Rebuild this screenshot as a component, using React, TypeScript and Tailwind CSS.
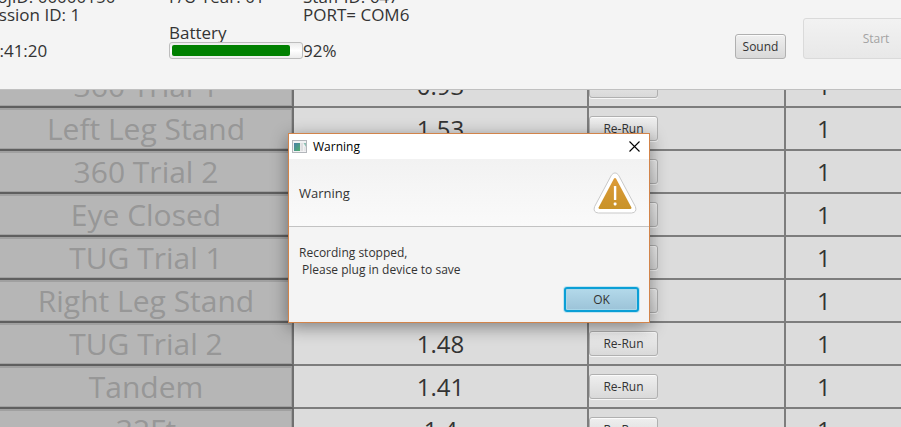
const trials = [
  { name: '360 Trial 1', value: '0.93', count: 1 },
  { name: 'Left Leg Stand', value: '1.53', count: 1 },
  { name: '360 Trial 2', value: '1.47', count: 1 },
  { name: 'Eye Closed', value: '1.45', count: 1 },
  { name: 'TUG Trial 1', value: '1.46', count: 1 },
  { name: 'Right Leg Stand', value: '1.44', count: 1 },
  { name: 'TUG Trial 2', value: '1.48', count: 1 },
  { name: 'Tandem', value: '1.41', count: 1 },
  { name: '32Ft', value: '1.4', count: 1 },
];

const raised =
  'rounded-[3px] border border-[#b0b0b0] bg-linear-to-b from-[#efefef] to-[#d9d9d9] text-[#333] shadow-[0_1px_0_#f6f6f6,inset_0_1px_0_#fbfbfb]';

function BatteryBar({ percent }: { percent: number }) {
  return (
    <div
      role="progressbar"
      aria-label="Battery"
      aria-valuenow={percent}
      className="h-[17px] w-full rounded-[3px] border border-[#bdbdbd] bg-linear-to-b from-[#ececec] via-white to-[#ececec] p-[2px]"
    >
      <div className="h-full rounded-[2px] bg-[#008000]" style={{ width: `${percent}%` }} />
    </div>
  );
}

function Header() {
  return (
    <header className="flex h-[90px] shrink-0 overflow-hidden border-b border-[#c0c0c0] bg-[#f4f4f4]">
      <div className="-mt-[12px] -ml-[20px] grid shrink-0 grid-cols-[189px_134px_134px] grid-rows-[repeat(4,18px)] text-[17px] leading-[18px] whitespace-nowrap text-[#333]">
        <span>ProjID: 00000150</span>
        <span>F/U Year: 01</span>
        <span>Staff ID: 647</span>
        <span>Session ID: 1</span>
        <span />
        <span>PORT= COM6</span>
        <span />
        <span>Battery</span>
        <span />
        <span>10:41:20</span>
        <BatteryBar percent={92} />
        <span>92%</span>
      </div>
      <div className="flex flex-1 items-end justify-end gap-[17px] pb-[30px] text-[12px]">
        <button className={`h-[25px] w-[51px] ${raised}`}>Sound</button>
        <button
          disabled
          className="-mr-12 h-[41px] w-[146px] rounded-[3px] border border-[#dadada] bg-linear-to-b from-[#f2f2f2] to-[#e8e8e8] text-[#a3a3a3]"
        >
          Start
        </button>
      </div>
    </header>
  );
}

function TrialTable() {
  return (
    <table className="-mt-[25px] w-full table-fixed border-separate border-spacing-0 bg-[#dcdcdc] text-[24px] leading-[32px] text-[#333]">
      <colgroup>
        <col className="w-[294px]" />
        <col className="w-[295px]" />
        <col className="w-[197px]" />
        <col />
      </colgroup>
      <tbody>
        {trials.map((t) => (
          <tr key={t.name} className="h-[43px]">
            <th
              scope="row"
              className="h-[43px] border-r-2 border-b-2 border-r-[#707070] border-b-[#5f5f5f] bg-[#b6b6b6] p-0 text-center text-[30px] font-normal text-[#979797] shadow-[inset_0_2px_0_#a0a0a0,inset_-1px_-1px_0_#a0a0a0]"
            >
              {t.name}
            </th>
            <td className="border-r-2 border-b-2 border-[#7d7d7d] p-0 text-center">{t.value}</td>
            <td className="border-r-2 border-b-2 border-[#7d7d7d] p-0">
              <button className={`block h-[25px] w-[69px] text-[12px] leading-[17px] ${raised}`}>Re-Run</button>
            </td>
            <td className="border-b-2 border-[#7d7d7d] p-0 pl-[31px]">{t.count}</td>
          </tr>
        ))}
      </tbody>
    </table>
  );
}

function WindowIcon() {
  return (
    <svg width="15" height="13" viewBox="0 0 15 13" aria-hidden="true">
      <defs>
        <linearGradient id="pane" x1="0" y1="0" x2="1" y2="1">
          <stop offset="0" stopColor="#4a7fa8" />
          <stop offset="1" stopColor="#4fae6c" />
        </linearGradient>
      </defs>
      <rect x="0.5" y="0.5" width="14" height="12" fill="#f1f1f3" stroke="#b3b6bb" />
      <rect x="2" y="3" width="6" height="8" fill="url(#pane)" />
      <rect x="8.5" y="3" width="2.5" height="8" fill="#dedee0" />
      <path d="M11.5 3 H14 V7 Z" fill="#8fc0b4" />
      <rect x="12" y="7" width="2" height="4" fill="#e6e6e8" />
    </svg>
  );
}

function WarningIcon() {
  return (
    <svg width="44" height="42" viewBox="0 0 44 42" aria-hidden="true">
      <defs>
        <linearGradient id="amber" x1="0" y1="0" x2="0" y2="1">
          <stop offset="0" stopColor="#dc9a38" />
          <stop offset="1" stopColor="#c99328" />
        </linearGradient>
      </defs>
      <path
        d="M18.4 3.2 Q22 -1.4 25.6 3.2 L42.4 34.6 Q44.4 40.4 38.6 41 H5.4 Q-0.4 40.4 1.6 34.6 Z"
        fill="#fff"
        stroke="#c9c9c9"
      />
      <path d="M21 6.6 Q22 5.4 23 6.6 L38.4 35.6 Q38.8 37 37.4 37 H6.6 Q5.2 37 5.6 35.6 Z" fill="url(#amber)" />
      <rect x="20.9" y="14" width="2.4" height="14" rx="0.6" fill="#fff" />
      <rect x="20.7" y="30.6" width="2.8" height="2.8" rx="0.8" fill="#fff" />
    </svg>
  );
}

function WarningDialog() {
  return (
    <section
      role="dialog"
      aria-labelledby="dialog-title"
      className="absolute top-[133px] left-[288px] w-[362px] border border-[#d2844a] bg-[#f4f4f4] text-[12px] leading-[17px] text-[#333] shadow-[0_4px_16px_rgba(0,0,0,0.42)]"
    >
      <div className="flex h-[25px] items-center bg-white pr-[9px] pl-[3px] text-black">
        <WindowIcon />
        <h1 id="dialog-title" className="flex-1 pl-[6px]">
          Warning
        </h1>
        <button aria-label="Close">
          <svg width="11" height="11" viewBox="0 0 11 11" aria-hidden="true">
            <path d="M0.5 0.5 L10.5 10.5 M10.5 0.5 L0.5 10.5" stroke="#000" strokeWidth="1.1" />
          </svg>
        </button>
      </div>
      <div className="flex h-[68px] items-center justify-between border-b border-[#c3c3c3] bg-linear-to-b from-[#f2f2f2] to-[#fafafa] pt-px pr-3 pl-[10px] text-[13px]">
        <h2>Warning</h2>
        <WarningIcon />
      </div>
      <p className="px-[10px] pt-[17px]">
        Recording stopped,
        <br />
        <span className="pl-[3px]">Please plug in device to save</span>
      </p>
      <div className="flex justify-end px-[10px] pt-[9px] pb-[10px]">
        <button className="h-[25px] w-[75px] rounded-[3px] border-2 border-[#0a9fd6] bg-linear-to-b from-[#b3d9ea] to-[#9cc3d8] shadow-[0_0_0_1px_#c3e4f0,inset_0_0_0_1px_#a9d6e8]">
          OK
        </button>
      </div>
    </section>
  );
}

export default function App() {
  return (
    <div className="relative flex h-screen flex-col overflow-hidden bg-[#dcdcdc] font-['Open_Sans','Noto_Sans',sans-serif]">
      <Header />
      <main className="min-h-0 flex-1 overflow-hidden">
        <TrialTable />
      </main>
      <WarningDialog />
    </div>
  );
}
